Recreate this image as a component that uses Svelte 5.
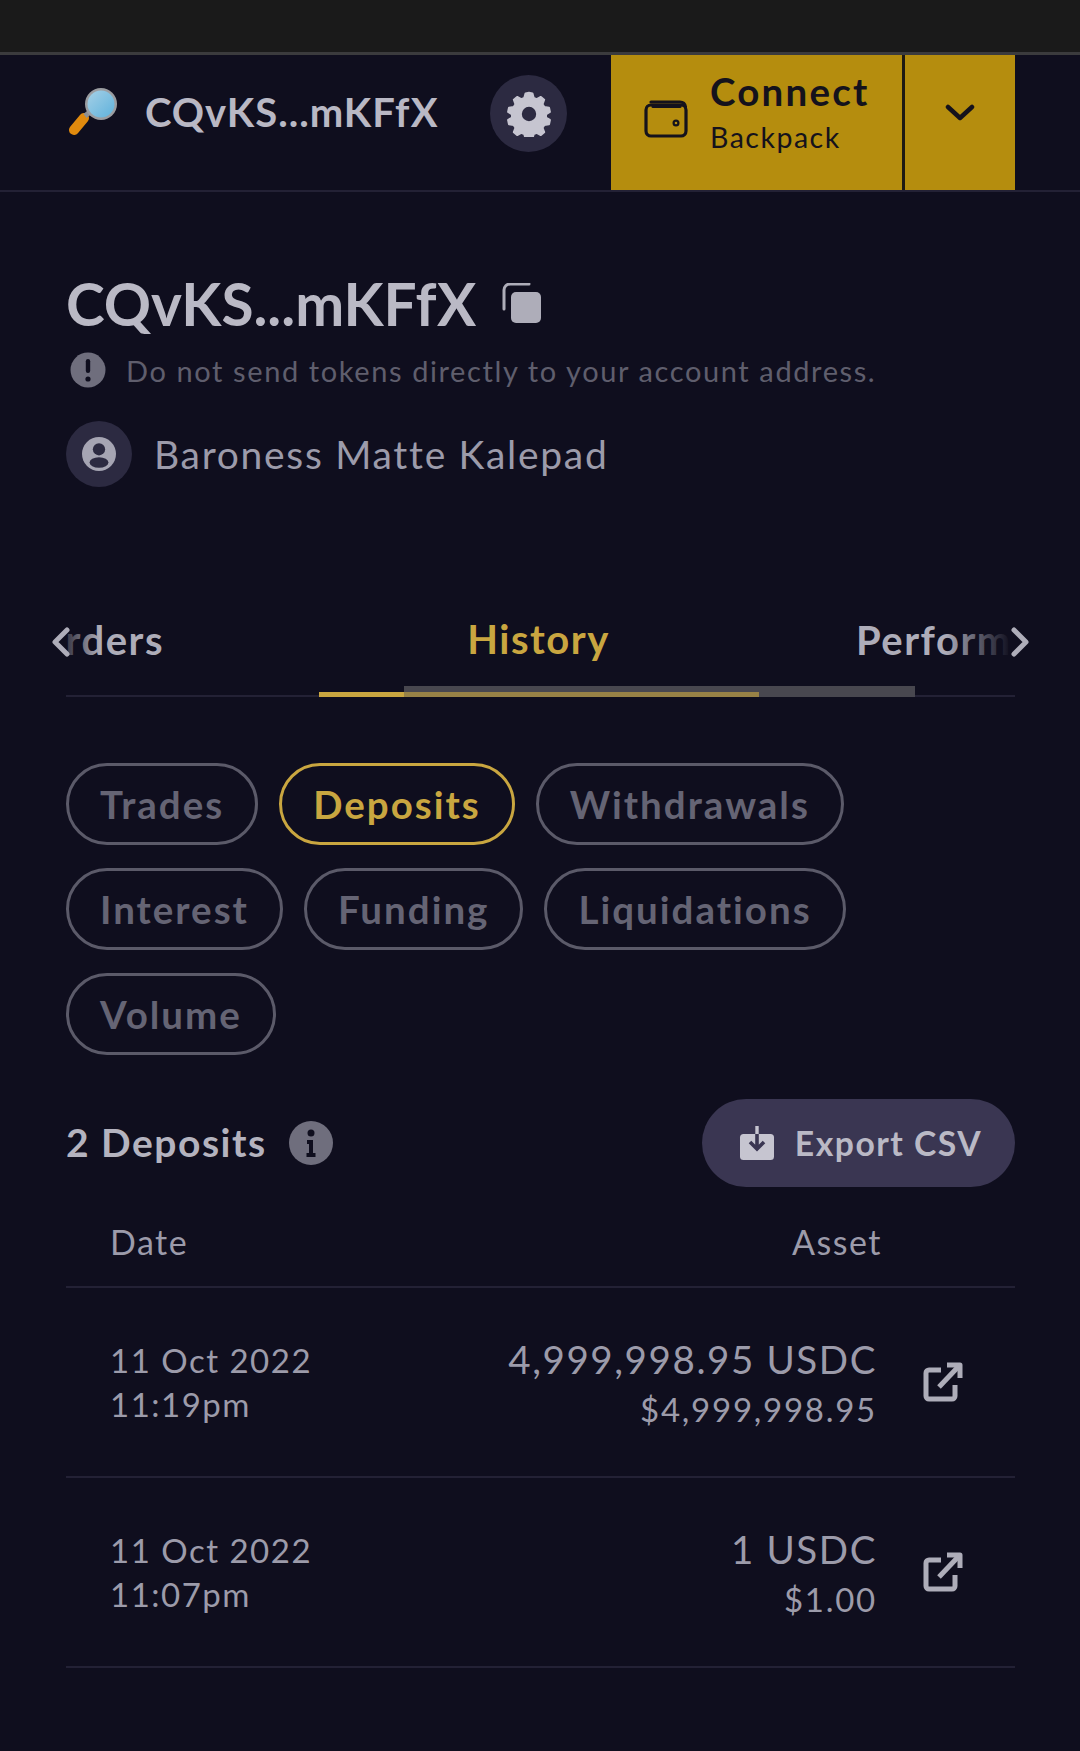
<script>
  const row1 = ['Trades', 'Deposits', 'Withdrawals', 'Interest', 'Funding', 'Liquidations', 'Volume'];
  const rows = [
    { d: '11 Oct 2022', t: '11:19pm', a: '4,999,998.95 USDC', v: '$4,999,998.95' },
    { d: '11 Oct 2022', t: '11:07pm', a: '1 USDC', v: '$1.00' }
  ];
</script>

<div class="page">
  <div class="status"></div>
  <header class="nav">
    <div class="acct">
      <svg class="glass" viewBox="0 0 50 50" width="50" height="50">
        <defs>
          <linearGradient id="lens" x1="0" y1="0" x2="1" y2="1">
            <stop offset="0" stop-color="#a5d0e6" /><stop offset="1" stop-color="#5fb2dc" />
          </linearGradient>
        </defs>
        <path d="M6 43L16 31" stroke="#e08a0e" stroke-width="10" stroke-linecap="round" />
        <path d="M17 29L23 24" stroke="#8d8f92" stroke-width="5" />
        <circle cx="33" cy="17" r="16" fill="#9b9da1" />
        <circle cx="33" cy="17" r="13.500" fill="url(#lens)" />
      </svg>
      <span class="acct-name">CQvKS...mKFfX</span>
    </div>
    <button class="gear" aria-label="Settings">
      <svg viewBox="0 0 512 512" width="46" height="46">
        <path fill="#c6c5d0" fill-rule="evenodd" d="M256 20l38 8 14 50 34 14 46-25 36 30-18 50 20 32 52 8 10 46-44 26 0 38 44 26-10 46-52 8-20 32 18 50-36 30-46-25-34 14-14 50-38 8-38-8-14-50-34-14-46 25-36-30 18-50-20-32-52-8-10-46 44-26 0-38-44-26 10-46 52-8 20-32-18-50 36-30 46 25 34-14 14-50z M256 164a92 92 0 1 0 0 184a92 92 0 1 0 0-184z" stroke="#c6c5d0" stroke-width="24" stroke-linejoin="round" />
      </svg>
    </button>
    <div class="connect">
      <button class="connect-main">
        <svg viewBox="0 0 44 38" width="44" height="38" fill="none" stroke="#14121c" stroke-width="3.200">
          <rect x="2" y="5" width="40" height="31" rx="5" />
          <path d="M9 6.500H36M7 2H36c3 0 5 2 5.500 5" stroke-linecap="round" />
          <circle cx="32" cy="23" r="2.400" stroke-width="2.200" />
        </svg>
        <span class="connect-text">
          <b>Connect</b>
          <small>Backpack</small>
        </span>
      </button>
      <button class="connect-more" aria-label="More">
        <svg viewBox="0 0 30 20" width="30" height="20" fill="none" stroke="#14121c" stroke-width="4.500" stroke-linecap="round" stroke-linejoin="round">
          <path d="M3 4L15 15L27 4" />
        </svg>
      </button>
    </div>
  </header>

  <main class="content">
    <section class="profile">
      <div class="title-row">
        <h1>CQvKS...mKFfX</h1>
        <svg viewBox="0 0 40 40" width="40" height="40">
          <path d="M2 26V7a6 6 0 0 1 6-6h19" fill="none" stroke="#aeadb9" stroke-width="3" stroke-linecap="round" />
          <rect x="9" y="9" width="30" height="31" rx="5" fill="#aeadb9" />
        </svg>
      </div>
      <div class="warn">
        <svg viewBox="0 0 36 36" width="36" height="36">
          <circle cx="18" cy="18" r="17.500" fill="#6f6e7d" />
          <rect x="15.800" y="7" width="4.400" height="14" rx="2.200" fill="#0f0e1e" />
          <circle cx="18" cy="27" r="2.600" fill="#0f0e1e" />
        </svg>
        <span>Do not send tokens directly to your account address.</span>
      </div>
      <div class="profile-name">
        <span class="avatar">
          <svg viewBox="0 0 36 36" width="34" height="34">
            <circle cx="18" cy="18" r="18" fill="#a6a5b3" />
            <circle cx="18" cy="13" r="6.500" fill="#2c2a41" />
            <ellipse cx="18" cy="27" rx="10" ry="5.500" fill="#2c2a41" />
          </svg>
        </span>
        <span>Baroness Matte Kalepad</span>
      </div>
    </section>

    <nav class="tabs">
      <div class="tab-labels">
        <span class="tab side">Orders</span>
        <span class="tab active">History</span>
        <span class="tab side right">Performance</span>
      </div>
      <span class="fade fade-l"></span>
      <span class="fade fade-r"></span>
      <svg class="chev chev-l" viewBox="0 0 18 30" width="18" height="30" fill="none" stroke="#aeadb9" stroke-width="5" stroke-linecap="round" stroke-linejoin="round"><path d="M15 3L3 15L15 27" /></svg>
      <svg class="chev chev-r" viewBox="0 0 18 30" width="18" height="30" fill="none" stroke="#aeadb9" stroke-width="5" stroke-linecap="round" stroke-linejoin="round"><path d="M3 3L15 15L3 27" /></svg>
      <span class="bar-gray"></span>
      <span class="bar-gold"></span>
    </nav>

    <div class="pills">
      {#each row1 as p}
        <button class="pill" class:on={p === 'Deposits'}>{p}</button>
      {/each}
    </div>

    <div class="list-head">
      <div class="count">
        <h2>2 Deposits</h2>
        <svg viewBox="0 0 44 44" width="44" height="44">
          <circle cx="22" cy="22" r="22" fill="#6f6e7d" />
          <circle cx="22" cy="12" r="3.500" fill="#0f0e1e" />
          <path d="M18 19h6v13h2.500v4h-9v-4H20v-9h-2z" fill="#0f0e1e" />
        </svg>
      </div>
      <button class="export">
        <svg viewBox="0 0 36 36" width="36" height="36">
          <rect x="1" y="9" width="34" height="26" rx="3.500" fill="#c6c5d0" />
          <path d="M18 1v9" stroke="#c6c5d0" stroke-width="3.400" />
          <path d="M18 9v14M11 17l7 7 7-7" fill="none" stroke="#3a3652" stroke-width="3.600" />
        </svg>
        Export CSV
      </button>
    </div>

    <div class="thead">
      <span>Date</span>
      <span>Asset</span>
    </div>

    {#each rows as r}
      <div class="row">
        <div class="when"><div>{r.d}</div><div>{r.t}</div></div>
        <div class="amount"><div class="a">{r.a}</div><div class="v">{r.v}</div></div>
        <svg class="ext" viewBox="0 0 40 40" width="40" height="40" fill="none" stroke="#aeadb9" stroke-width="5" stroke-linejoin="round">
          <path d="M18 8H6a3 3 0 0 0-3 3v23a3 3 0 0 0 3 3h23a3 3 0 0 0 3-3V23" />
          <path d="M16 25L35 5" />
          <path d="M24 3h13v13" fill="none" />
        </svg>
      </div>
    {/each}
  </main>
</div>

<style>
  :global(body) { margin: 0; background: #0f0e1e; }
  .page {
    width: 1080px;
    height: 1751px;
    overflow: hidden;
    background: #0f0e1e;
    font-family: Lato, "Liberation Sans", sans-serif;
    color: #aeadb9;
  }
  button { font-family: inherit; border: 0; padding: 0; }
  .status { height: 52px; background: #1a1a1a; border-bottom: 3px solid #3b3b3d; }

  .nav {
    height: 135px;
    display: flex;
    align-items: stretch;
    padding: 0 65px 0 68px;
    border-bottom: 2px solid #232135;
  }
  .acct { display: flex; align-items: center; gap: 27px; width: 422px; padding-bottom: 22px; box-sizing: border-box; flex: none; }
  .acct-name { font-size: 40px; font-weight: 700; letter-spacing: 1px; color: #b9b8c4; }
  .gear {
    width: 77px; height: 77px; border-radius: 50%;
    background: #2c2a41;
    display: flex; align-items: center; justify-content: center;
    margin-top: 20px; flex: none;
  }
  .connect { margin-left: 44px; display: flex; background: #b58d0e; height: 135px; }
  .connect-main {
    width: 291px; display: flex; align-items: center; gap: 22px;
    padding: 0 0 0 33px; box-sizing: border-box;
    background: #b58d0e; color: #14121c; text-align: left;
  }
  .connect-main svg { margin-bottom: 8px; }
  .connect-text { display: flex; flex-direction: column; margin-bottom: 18px; }
  .connect-text b { font-size: 38.500px; font-weight: 700; letter-spacing: 2.200px; line-height: 46px; }
  .connect-text small { font-size: 28.500px; letter-spacing: 1.500px; line-height: 46px; }
  .connect-more {
    width: 113px; background: #b58d0e; border-left: 3px solid #1f1a12;
    display: flex; align-items: center; justify-content: center; padding-bottom: 20px;
  }

  .content { padding: 0 65px 0 66px; }

  .profile { padding-top: 76px; }
  .title-row { display: flex; align-items: center; gap: 26px; height: 70px; }
  h1 { margin: 0; font-size: 58.500px; font-weight: 700; color: #bab9c5; line-height: 70px; }
  .warn { display: flex; align-items: center; gap: 20px; margin-top: 14px; padding-left: 4px; font-size: 29px; letter-spacing: 1.600px; color: #5f5e6d; }
  .profile-name { display: flex; align-items: center; gap: 22px; margin-top: 33px; font-size: 39px; letter-spacing: 1.700px; color: #9c9baa; }
  .avatar { width: 66px; height: 66px; border-radius: 50%; background: #2c2a41; display: flex; align-items: center; justify-content: center; }

  .tabs { position: relative; height: 91px; margin-top: 117px; border-bottom: 2px solid #232135; }
  .tab-labels { display: flex; justify-content: center; align-items: center; height: 70px; padding-right: 4px; position: relative; overflow: hidden; }
  .tab { font-size: 40px; font-weight: 700; letter-spacing: 1.500px; line-height: 70px; color: #aeadb9; white-space: nowrap; }
  .tab.active { color: #c9a640; }
  .tab.side { position: absolute; top: 1px; }
  .tab:first-child { right: calc(100% - 98px); }
  .tab.right { left: 790px; }
  .fade { position: absolute; top: 0; height: 70px; }
  .fade-l { left: 0; width: 34px; background: linear-gradient(90deg, rgba(15,14,30,0.75), rgba(15,14,30,0)); }
  .fade-r { right: 0; width: 70px; background: linear-gradient(270deg, #0f0e1e 6%, rgba(15,14,30,0)); }
  .chev { position: absolute; top: 23px; }
  .chev-l { left: -14px; }
  .chev-r { right: -14px; }
  .bar-gray { position: absolute; left: 338px; width: 511px; bottom: -2px; height: 11px; background: #48474f; }
  .bar-gold { position: absolute; left: 253px; width: 440px; bottom: -2px; height: 5px; background: rgba(201,166,64,0.62); }
  .bar-gold::before { content: ""; position: absolute; left: 0; top: 0; bottom: 0; width: 85px; background: #c9a640; }

  .pills { display: flex; flex-wrap: wrap; gap: 23px 21px; margin-top: 66px; width: 850px; }
  .pill {
    height: 82px; padding: 0 31px; box-sizing: border-box;
    background: transparent; border: 3px solid #5b5a69; border-radius: 41px;
    font-size: 38.500px; font-weight: 700; letter-spacing: 2px; color: #656474;
  }
  .pill.on { border-color: #c9a640; color: #c9a640; }

  .list-head { display: flex; justify-content: space-between; align-items: center; margin-top: 44px; height: 88px; }
  .count { display: flex; align-items: center; gap: 22px; }
  h2 { margin: 0 0 3px; font-size: 39px; font-weight: 700; letter-spacing: 1.500px; color: #b4b3bf; }
  .export {
    width: 313px; height: 88px; border-radius: 44px; background: #3a3652;
    display: flex; align-items: center; justify-content: center; gap: 20px;
    padding-left: 4px; box-sizing: border-box;
    font-size: 33.700px; font-weight: 700; letter-spacing: 1.500px; color: #bab9c5;
  }

  .thead {
    display: flex; justify-content: space-between; align-items: center;
    height: 101px; padding: 10px 133px 0 44px; box-sizing: border-box;
    border-bottom: 2px solid #232135;
    font-size: 34px; letter-spacing: 1.500px; color: #9c9baa;
  }
  .row {
    display: flex; align-items: center; height: 190px; padding-left: 44px; box-sizing: border-box;
    border-bottom: 2px solid #232135; color: #9c9baa;
  }
  .when { font-size: 33px; letter-spacing: 1.500px; line-height: 44px; flex: 1; }
  .amount { text-align: right; margin-top: 3px; }
  .a { font-size: 38.500px; letter-spacing: 1.600px; line-height: 50px; }
  .v { font-size: 33px; letter-spacing: 1.750px; line-height: 50px; }
  .ext { margin-left: 46px; margin-right: 52px; }
</style>
